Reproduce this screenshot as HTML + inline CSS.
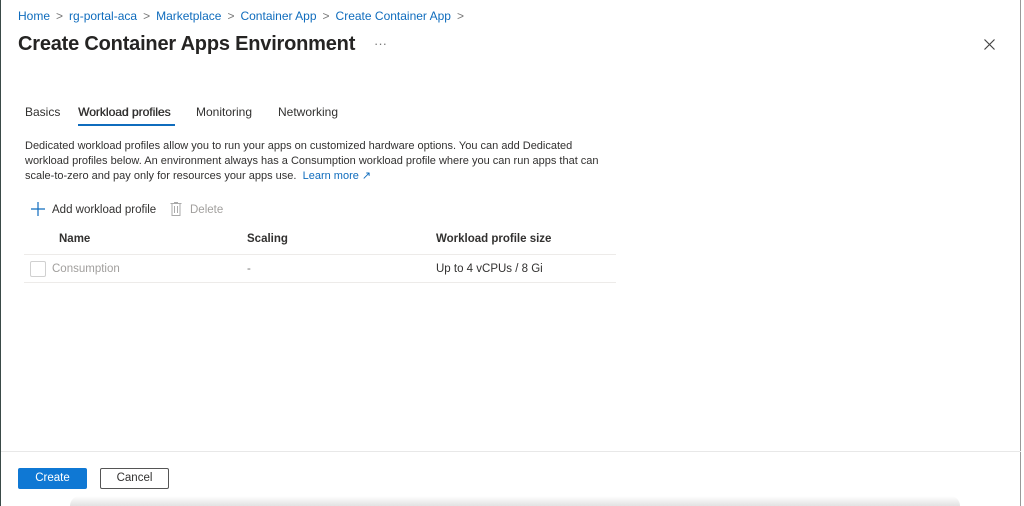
<!DOCTYPE html>
<html style="overflow:hidden;height:506px"><head><style>
body{margin:0;width:1024px;height:506px;background:#fff;font-family:"Liberation Sans",sans-serif;position:relative;overflow:hidden;color:#323130}
.a{position:absolute;white-space:nowrap}
.bc{top:9px;left:18px;font-size:12px;color:#0f6cbd}
.bc span{color:#777;margin:0 6px}
.sb{text-shadow:0.4px 0 0 currentColor}
</style></head><body>
<div class="a" style="left:0;top:0;width:1px;height:506px;background:#3a4a48"></div>
<div class="a" style="right:3px;top:0;width:1px;height:506px;background:#999"></div>
<div class="a bc">Home<span>&gt;</span>rg-portal-aca<span>&gt;</span>Marketplace<span>&gt;</span>Container App<span>&gt;</span>Create Container App<span>&gt;</span></div>
<div class="a" style="left:18px;top:33px;font-size:20px;color:#252423;font-weight:bold;letter-spacing:-0.2px">Create Container Apps Environment</div>
<div class="a" style="left:374px;top:36px;font-size:13px;color:#777">···</div>
<svg class="a" style="left:984px;top:39px" width="11" height="11" viewBox="0 0 11 11"><path d="M0.5 0.5L10.5 10.5M10.5 0.5L0.5 10.5" stroke="#444" stroke-width="1.2"/></svg>
<div class="a" style="left:25px;top:105px;font-size:12px">Basics</div>
<div class="a sb" style="left:78px;top:105px;font-size:12px">Workload profiles</div>
<div class="a" style="left:78px;top:124px;width:97px;height:2px;background:#0f6cbd"></div>
<div class="a" style="left:196px;top:105px;font-size:12px">Monitoring</div>
<div class="a" style="left:278px;top:105px;font-size:12px">Networking</div>
<div class="a" style="left:25px;top:139px;font-size:11px;line-height:15px;color:#323130;white-space:normal;width:582px">Dedicated workload profiles allow you to run your apps on customized hardware options. You can add Dedicated workload profiles below. An environment always has a Consumption workload profile where you can run apps that can scale-to-zero and pay only for resources your apps use. &nbsp;<span style="color:#0f6cbd">Learn more ↗</span></div>
<svg class="a" style="left:31px;top:202px" width="14" height="14" viewBox="0 0 14 14"><path d="M7 0V14M0 7H14" stroke="#0f6cbd" stroke-width="1.2"/></svg>
<div class="a" style="left:52px;top:204px;font-size:11.5px">Add workload profile</div>
<svg class="a" style="left:170px;top:202px" width="12" height="14" viewBox="0 0 12 14"><path d="M0.5 1.5H11.5M2 1.5V13.5H10V1.5M4 0.5H8M4.5 4V11M7.5 4V11" stroke="#aaa" fill="none"/></svg>
<div class="a" style="left:190px;top:204px;font-size:11.5px;color:#a19f9d">Delete</div>
<div class="a" style="left:59px;top:233px;font-size:11.5px;font-weight:bold">Name</div>
<div class="a" style="left:247px;top:233px;font-size:11.5px;font-weight:bold">Scaling</div>
<div class="a" style="left:436px;top:233px;font-size:11.5px;font-weight:bold">Workload profile size</div>
<div class="a" style="left:24px;top:254px;width:592px;height:1px;background:#edebe9"></div>
<div class="a" style="left:30px;top:261px;width:14px;height:14px;border:1px solid #d0d0d0;border-radius:2px"></div>
<div class="a" style="left:52px;top:263px;font-size:11.5px;color:#a19f9d">Consumption</div>
<div class="a" style="left:247px;top:263px;font-size:11.5px;color:#777">-</div>
<div class="a" style="left:436px;top:263px;font-size:11.5px">Up to 4 vCPUs / 8 Gi</div>
<div class="a" style="left:24px;top:282px;width:592px;height:1px;background:#edebe9"></div>
<div class="a" style="left:1px;top:451px;width:1020px;height:1px;background:#e8e8e8"></div>
<div class="a" style="left:18px;top:468px;width:69px;height:21px;background:#0f78d4;border-radius:2px;color:#fff;font-size:11.5px;text-align:center;line-height:21px">Create</div>
<div class="a" style="left:100px;top:468px;width:67px;height:19px;border:1px solid #555;border-radius:2px;font-size:11.5px;text-align:center;line-height:19px">Cancel</div>
<div class="a" style="left:70px;top:496px;width:890px;height:10px;background:linear-gradient(#fff,#e2e2e2);border-radius:40px 40px 0 0"></div>
</body></html>
